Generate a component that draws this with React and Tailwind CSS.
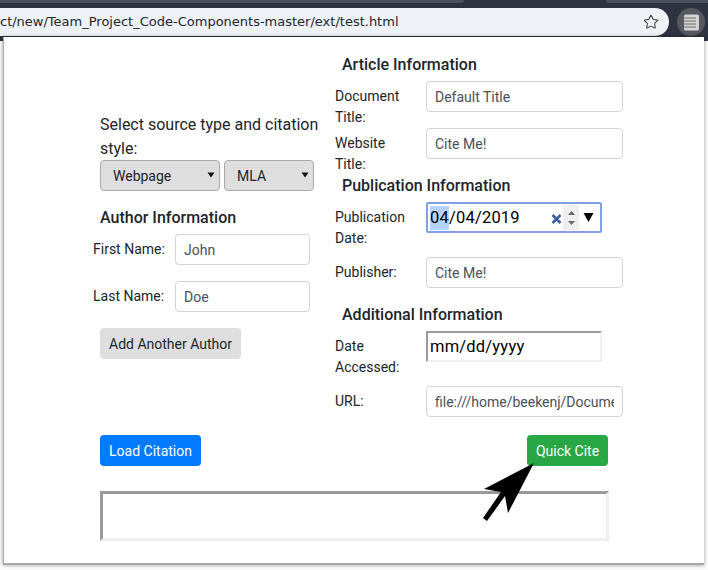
import React from "react";
import { Star } from "lucide-react";

const inputCls = "block h-[31px] w-[197px] rounded-[4px] border border-[#ced4da] bg-white px-[8px] text-[14px] leading-[21px] text-[#495057] outline-none";

function TextBox({ value, className = "" }) {
  return <input readOnly value={value} className={`${inputCls} ${className}`} />;
}

function FieldRow({ label, children, className = "" }) {
  return (
    <div className={`flex items-start ${className}`}>
      <div className="w-[91px] shrink-0 pt-[5px] text-[14px] leading-[21px] text-[#212529]">{label}</div>
      {children}
    </div>
  );
}

function Heading({ children, className = "" }) {
  return <h3 className={`pl-[7px] text-[16px] font-medium leading-[24px] text-[#212529] ${className}`}>{children}</h3>;
}

function SelectBox({ value, className = "" }) {
  return (
    <div className={`relative flex h-[31px] items-center rounded-[4px] border border-[#a9a9a9] bg-[#dedede] pl-[12px] pt-[1px] text-[14px] text-[#212529] ${className}`}>
      {value}
      <svg className="absolute right-[4px] top-[11px]" width="8" height="6" viewBox="0 0 8 6"><path d="M0.5 0.5H7.5L4 5.5Z" fill="#111" /></svg>
    </div>
  );
}

export default function App() {
  return (
    <div className="relative h-[570px] w-[708px] overflow-hidden bg-[#fbfbfb] font-['Roboto',sans-serif]">
      <header className="relative mb-[-4px] h-[41px] w-full bg-[#2d343f]">
        <div className="absolute left-0 top-0 h-[3px] w-[464px] rounded-br-[3px] bg-[#4a5261]" />
        <div className="absolute left-[606px] top-0 h-[3px] w-[102px] rounded-bl-[3px] bg-[#4a5261]" />
        <div className="absolute left-0 top-[8px] flex h-[28px] w-[669px] items-center justify-between rounded-r-[14px] bg-[#eef2f6] pr-[10px]">
          <span className="font-['DejaVu_Sans',sans-serif] text-[13px] leading-[28px] text-[#22272e]">ct/new/Team_Project_Code-Components-master/ext/test.html</span>
          <Star size={16} strokeWidth={1.6} className="text-[#444]" />
        </div>
        <div className="absolute left-[677px] top-[8px] flex h-[28px] w-[28px] items-center justify-center rounded-full bg-[#565a60]">
          <svg width="17" height="17" viewBox="0 0 17 17">
            <rect x="1" y="0.5" width="15" height="16" rx="1.5" fill="#d4d4d4" />
            <path d="M0.5 4H13M0.5 7H13M0.5 10H13M0.5 13H13" stroke="#6c6c6c" strokeWidth="1" />
          </svg>
        </div>
      </header>

      <main className="relative ml-[3px] h-[528px] w-[701px] border-b-2 border-l border-[#a9aaa8] bg-white pl-[96px] shadow-[0_0_4px_rgba(0,0,0,0.4)]">
        <div className="flex">
          <section className="w-[235px] shrink-0 pt-[76px]">
            <p className="w-[225px] text-[16px] leading-[24px] text-[#212529]">Select source type and citation style:</p>
            <div className="mt-[-1px] flex gap-[4px]">
              <SelectBox value="Webpage" className="w-[120px]" />
              <SelectBox value="MLA" className="w-[90px]" />
            </div>
            <Heading className="mt-[15px] !pl-0">Author Information</Heading>
            <div className="ml-[-7px] mt-[4px] flex items-start">
              <div className="w-[82px] pt-[5px] text-[14px] leading-[21px] text-[#212529]">First Name:</div>
              <TextBox value="John" className="!w-[135px]" />
            </div>
            <div className="ml-[-7px] mt-[16px] flex items-start">
              <div className="w-[82px] pt-[5px] text-[14px] leading-[21px] text-[#212529]">Last Name:</div>
              <TextBox value="Doe" className="!w-[135px]" />
            </div>
            <button className="mt-[16px] block h-[31px] w-[141px] rounded-[4px] bg-[#dedede] pt-[1px] text-[14px] text-[#212529]">Add Another Author</button>
          </section>

          <section className="w-[288px] pt-[16px]">
            <Heading>Article Information</Heading>
            <FieldRow label={<>Document<br />Title:</>} className="mt-[4px]"><TextBox value="Default Title" /></FieldRow>
            <FieldRow label={<>Website<br />Title:</>}><TextBox value="Cite Me!" /></FieldRow>
            <Heading className="mt-[-1px]">Publication Information</Heading>
            <FieldRow label={<>Publication<br />Date:</>} className="mt-[4px]">
              <div className="relative flex h-[31px] w-[176px] items-center rounded-[2px] border-2 border-[#7f9fe6] pl-[2px] pt-[1px] text-[16.5px] tracking-[0.2px] text-black">
                <span className="bg-[#b5d3fb]">04</span>/04/2019
                <svg className="absolute left-[123px] top-[10px]" width="11" height="10" viewBox="0 0 11 10"><path d="M1.5 1L9.5 9M9.5 1L1.5 9" stroke="#3b5f9e" strokeWidth="2.6" /></svg>
                <span className="absolute left-[135px] top-[1px] flex h-[25px] w-[16px] flex-col items-center justify-center gap-[6px] bg-[#efefef]">
                  <svg width="7" height="4" viewBox="0 0 7 4"><path d="M3.5 0L7 4H0Z" fill="#666" /></svg>
                  <svg width="7" height="4" viewBox="0 0 7 4"><path d="M3.5 4L7 0H0Z" fill="#666" /></svg>
                </span>
                <svg className="absolute left-[155px] top-[9px]" width="11" height="9" viewBox="0 0 11 9"><path d="M0.5 0H10.5L5.5 9Z" fill="#000" /></svg>
              </div>
            </FieldRow>
            <FieldRow label="Publisher:" className="mt-[8px]"><TextBox value="Cite Me!" /></FieldRow>
            <Heading className="mt-[15px]">Additional Information</Heading>
            <FieldRow label={<>Date<br />Accessed:</>} className="mt-[4px]">
              <div className="flex h-[31px] w-[176px] items-center border-2 border-b-[#eeeeee] border-l-[#9a9a9a] border-r-[#eeeeee] border-t-[#9a9a9a] pl-[2px] pt-[2px] text-[16.5px] tracking-[0.2px] text-black">mm/dd/yyyy</div>
            </FieldRow>
            <FieldRow label="URL:" className="mt-[8px]"><TextBox value="file:///home/beekenj/Documents/new" /></FieldRow>
          </section>
        </div>

        <div className="mt-[18px] flex w-[508px] justify-between">
          <button className="h-[31px] w-[101px] rounded-[4px] bg-[#007bff] pt-[1px] text-[14px] text-white">Load Citation</button>
          <button className="h-[31px] w-[81px] rounded-[4px] bg-[#28a745] pt-[1px] text-[14px] text-white">Quick Cite</button>
        </div>
        <div className="mt-[25px] h-[50px] w-[509px] border-[3px] border-b-[#eeeeee] border-l-[#9a9a9a] border-r-[#eeeeee] border-t-[#9a9a9a] bg-white" />
      </main>

      <svg className="absolute left-[480px] top-[460px]" width="56" height="64" viewBox="0 0 56 64">
        <path d="M54 3L28 53L25 36L7 61L3 58L21 32L4 29Z" fill="#000" />
      </svg>
    </div>
  );
}
